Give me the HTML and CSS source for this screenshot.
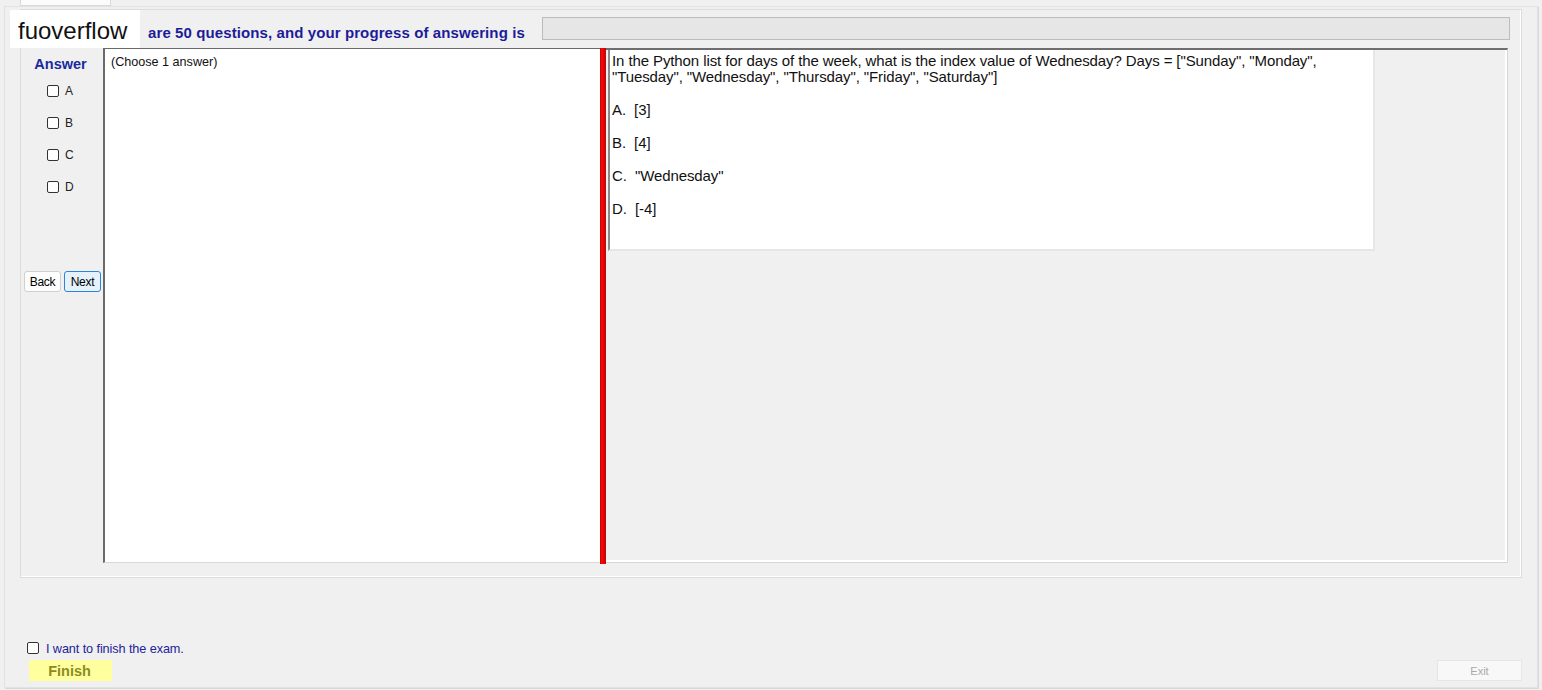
FILE: index.html
```html
<!DOCTYPE html>
<html>
<head>
    <title>Exam</title>
    <link rel="stylesheet" href="styles.css">
</head>
<body>

    <div class="tab"></div>

    <div class="panel">
        <div class="group">
            <div class="header">
                <div class="header-text">are 50 questions, and your progress of answering is</div>
                <div class="progress"></div>
            </div>

            <div class="main">
                <div class="answers">
                    <div class="answer-title">Answer</div>
                    <label class="option"><input type="checkbox" class="check"> A</label>
                    <label class="option"><input type="checkbox" class="check"> B</label>
                    <label class="option"><input type="checkbox" class="check"> C</label>
                    <label class="option"><input type="checkbox" class="check"> D</label>
                    <div class="nav">
                        <button class="nav-btn">Back</button>
                        <button class="nav-btn next-btn">Next</button>
                    </div>
                </div>

                <div class="choice-pane">(Choose 1 answer)</div>

                <div class="splitter"></div>

                <div class="question-pane">
                    <div class="question-box">
                        <p class="question-text">In the Python list for days of the week, what is the index value of Wednesday? Days = ["Sunday", "Monday", "Tuesday", "Wednesday", "Thursday", "Friday", "Saturday"]</p>
                        <p class="question-opt">A.&nbsp; [3]</p>
                        <p class="question-opt">B.&nbsp; [4]</p>
                        <p class="question-opt">C.&nbsp; "Wednesday"</p>
                        <p class="question-opt">D.&nbsp; [-4]</p>
                    </div>
                </div>
            </div>
        </div>

        <div class="footer">
            <label class="finish-check"><input type="checkbox" class="check"> I want to finish the exam.</label>
            <div class="footer-row">
                <button class="finish-btn">Finish</button>
                <button class="exit-btn">Exit</button>
            </div>
        </div>
    </div>

    <!-- watermark label sitting over the header -->
    <div class="watermark">fuoverflow</div>

</body>
</html>
```

FILE: styles.css
```css
/* General body styling */
body {
    margin: 0;
    height: 690px;
    overflow: hidden;
    background: #f0f0f0;
    font-family: "Liberation Sans", Arial, sans-serif;
    color: #000;
    position: relative;
}

/* Little tab at the very top */
.tab {
    width: 89px;
    height: 5px;
    margin-left: 20px;
    background: #fbfbfb;
    border: 1px solid #dadada;
    border-top: none;
}

/* Outer panel */
.panel {
    margin: 0 4px;
    height: 680px;
    border: 1px solid #e2e2e2;
    box-shadow: 1px 1px 0 #d8d8d8;
}

/* Group box with the question */
.group {
    margin: 2px 15px 0 15px;
    height: 567px;
    border: 1px solid #dcdcdc;
    box-shadow: inset -1px -1px 0 #fff;
    padding: 0 13px 0 1px;
}

.header {
    display: flex;
    height: 38px;
}

.header-text {
    width: 394px;
    padding-left: 126px;
    padding-top: 14px;
    font-size: 15px;
    letter-spacing: 0.1px;
    font-weight: bold;
    color: #1c1c9a;
    white-space: nowrap;
    overflow: hidden;
}

.progress {
    flex: 1;
    height: 21px;
    margin: 7px -2px 0 0;
    background: #e6e6e6;
    border: 1px solid #bcbcbc;
}

.main {
    display: flex;
    height: 515px;
}

/* Left answer column */
.answers {
    width: 81px;
    padding-top: 8px;
}

.answer-title {
    height: 16px;
    line-height: 16px;
    margin-bottom: 3px;
    padding-right: 4px;
    text-align: center;
    font-size: 14.5px;
    font-weight: bold;
    color: #1a2a9e;
}

.option {
    display: flex;
    align-items: center;
    height: 32px;
    padding-left: 25px;
    font-size: 12px;
    color: #222;
}

.check {
    appearance: none;
    width: 12px;
    height: 12px;
    margin: 0 6px 0 0;
    background: #fff;
    border: 1px solid #333;
    border-radius: 2px;
}

.nav {
    display: flex;
    gap: 3px;
    margin-top: 68px;
    padding-left: 2px;
}

.nav-btn {
    width: 37px;
    height: 21px;
    padding: 0;
    font-family: "Liberation Sans", Arial, sans-serif;
    font-size: 12px;
    letter-spacing: -0.3px;
    color: #000;
    background: #fdfdfd;
    border: 1px solid #d0d0d0;
    border-radius: 3px;
}

.next-btn {
    background: #e5f1fb;
    border-color: #2f84d6;
}

/* Middle pane */
.choice-pane {
    width: 489px;
    padding: 6px 0 0 6px;
    background: #fff;
    border-left: 2px solid #6a6a6a;
    border-top: 1px solid #6a6a6a;
    border-bottom: 1px solid #d8d8d8;
    font-size: 12.6px;
    line-height: 14px;
    color: #111;
}

.splitter {
    width: 6px;
    height: 516px;
    background: linear-gradient(to right, #c40000, #f20d0d 30%, #e60000 70%, #a31414);
}

/* Right question pane */
.question-pane {
    flex: 1;
    border-top: 2px solid #6e6e6e;
    border-right: 1px solid #d6d6d6;
    border-bottom: 1px solid #d6d6d6;
    box-shadow: inset -2px -2px 0 #fff;
}

.question-box {
    width: 761px;
    height: 196px;
    margin-left: 2px;
    padding: 3px 0 0 2px;
    background: #fff;
    border-left: 2px solid #8a8a8a;
    border-right: 2px solid #e6e6e6;
    border-bottom: 2px solid #e6e6e6;
    font-size: 15px;
    letter-spacing: -0.1px;
    line-height: 16px;
    color: #111;
}

.question-text {
    margin: 0;
    width: 720px;
}

.question-opt {
    margin: 17px 0 0 0;
}

/* Footer */
.footer {
    padding: 63px 15px 0 22px;
}

.finish-check {
    display: flex;
    align-items: center;
    height: 16px;
    font-size: 12.7px;
    letter-spacing: -0.1px;
    color: #23239a;
}

.finish-check .check {
    margin: -3px 7px 0 0;
}

.footer-row {
    display: flex;
    justify-content: space-between;
    margin-top: 3px;
}

.finish-btn {
    width: 83px;
    height: 21px;
    margin-left: 2px;
    padding: 0 2px 0 0;
    background: #ffff9e;
    border: none;
    font-family: "Liberation Sans", Arial, sans-serif;
    font-size: 14.5px;
    font-weight: bold;
    color: #8c8c1e;
}

.exit-btn {
    width: 85px;
    height: 21px;
    padding: 0;
    background: #f8f8f8;
    border: 1px solid #e6e6e6;
    font-family: "Liberation Sans", Arial, sans-serif;
    font-size: 11px;
    color: #a8a8a8;
}

/* Watermark over the header */
.watermark {
    position: absolute;
    top: 10px;
    left: 10px;
    width: 122px;
    height: 38px;
    padding-left: 8px;
    line-height: 42px;
    background: #fff;
    font-size: 24px;
    color: #111;
}
```
